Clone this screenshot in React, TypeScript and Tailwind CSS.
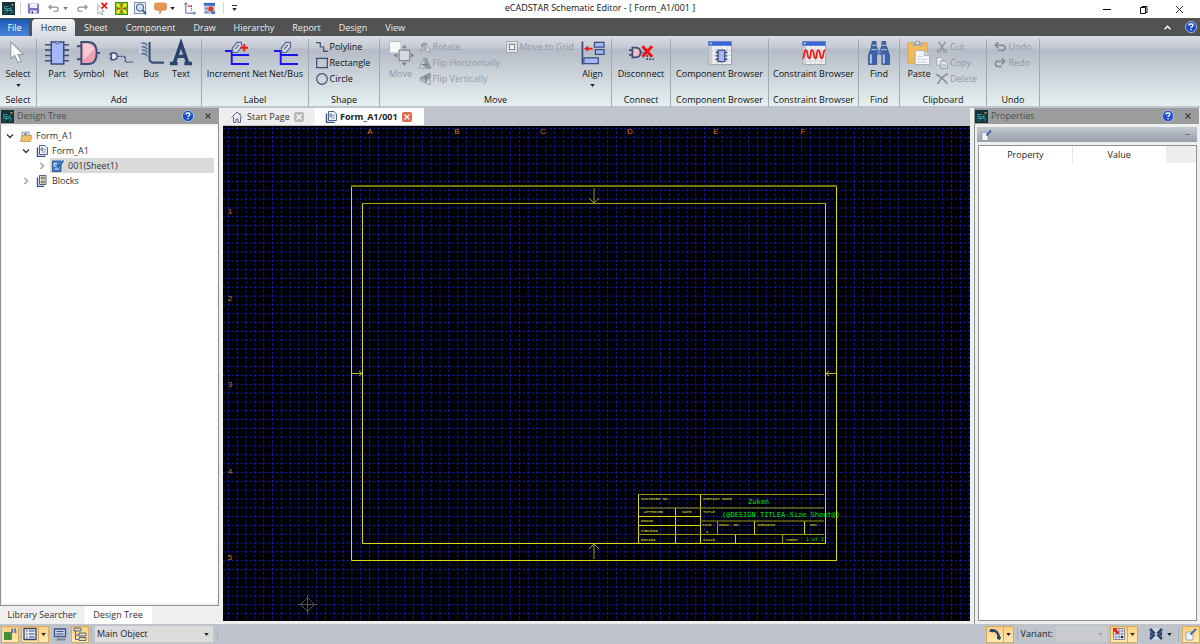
import type { ReactNode } from 'react';
import clsx from 'clsx';

/* ---------- small shared pieces ---------- */

function Caret({ className = 'text-[#222]' }: { className?: string }) {
  return (
    <svg viewBox="0 0 6 4" className={clsx('h-[3px] w-[5px] shrink-0', className)} aria-hidden>
      <path d="M0 0h6L3 4z" fill="currentColor" />
    </svg>
  );
}

function HelpIcon() {
  return (
    <svg viewBox="0 0 12 12" className="size-3" aria-hidden>
      <circle cx="6" cy="6" r="5.6" fill="#1f4fc4" stroke="#b9c6e6" strokeWidth=".8" />
      <path d="M2 4.500a4.500 4.500 0 0 1 8 0Q6 3 2 4.500z" fill="#6f97ea" />
      <path d="M4.200 4.600q0-1.700 1.800-1.700t1.800 1.500q0 .8-.9 1.300T6 7" fill="none" stroke="#fff" strokeWidth="1.300" />
      <rect x="5.400" y="8" width="1.300" height="1.300" fill="#fff" />
    </svg>
  );
}

function LogoIcon() {
  return (
    <svg viewBox="0 0 13 13" className="size-[13px] shrink-0" aria-hidden>
      <rect width="13" height="13" fill="#14323a" />
      <path d="M1.500 8.500h3v-2h-2V4.500h4M5.500 10V6.500h3v2h-3M9 4.500v4.500h2.500" fill="none" stroke="#36a0a3" strokeWidth=".9" />
      <path d="M1.500 11h4M8 11h3" stroke="#2b7f86" strokeWidth=".7" />
      <rect x="9.500" y="2" width="2" height="1.500" fill="#d99a3a" />
    </svg>
  );
}

function CloseIcon({ className }: { className?: string }) {
  return (
    <svg viewBox="0 0 8 8" className={clsx('size-2', className)} aria-hidden>
      <path d="M1.500 1.500l5 5M6.500 1.500l-5 5" stroke="currentColor" strokeWidth="1.100" />
    </svg>
  );
}

/* ---------- title bar ---------- */

function QuickButton({ label, children, wide }: { label: string; children: ReactNode; wide?: boolean }) {
  return (
    <button aria-label={label} className={clsx('flex h-4 items-center justify-center', wide ? 'w-5' : 'w-[19px]')}>
      <svg viewBox="0 0 14 14" className="size-[13px]" fill="none" aria-hidden>
        {children}
      </svg>
    </button>
  );
}

function TitleBar() {
  return (
    <header className="grid h-[18px] grid-cols-[1fr_auto_1fr] items-start bg-white">
      <div className="flex h-4 items-center">
        <div className="flex w-4 justify-center">
          <LogoIcon />
        </div>
        <div className="mr-0.5 ml-1 h-3 w-px bg-gray-300" />
        <QuickButton label="Save" wide>
          <path d="M1 1.500h11l1 1v10H1z" fill="#7a73b4" />
          <path d="M3 1.500h8v5H3z" fill="#f1f0f8" />
          <path d="M3.500 9h7v3.500h-7z" fill="#e2e0f0" />
          <path d="M5 10h1.500v2.500H5z" fill="#4b4490" />
        </QuickButton>
        <QuickButton label="Undo" wide>
          <path d="M4.500 3L2 5.500 4.500 8M2 5.500h7.500q2.500 0 2.500 2.200T9.500 10H7" stroke="#8a8a8a" strokeWidth="1.200" />
        </QuickButton>
        <Caret className="text-gray-500" />
        <div className="w-1" />
        <QuickButton label="Redo" wide>
          <path d="M9.500 3L12 5.500 9.500 8M12 5.500H4.500Q2 5.500 2 7.700T4.500 10H7" stroke="#8a8a8a" strokeWidth="1.200" />
        </QuickButton>
        <QuickButton label="Clear selection" wide>
          <path d="M2 3v10l2.500-2 1.500 3 1.500-.8L6 10h3z" fill="#fff" stroke="#8a93a5" strokeWidth=".8" />
          <path d="M6 1l6 6M12 1L6 7" stroke="#f01010" strokeWidth="1.900" />
        </QuickButton>
        <QuickButton label="Fit all">
          <path d="M0 0h14v14H0z" fill="#2e8b20" />
          <path d="M1 1h12v12H1z" fill="#7fc81c" />
          <path d="M2 2l3.500 3.500M12 2L8.500 5.500M2 12l3.500-3.500M12 12L8.500 8.500" stroke="#f4ee20" strokeWidth="2.500" />
          <path d="M7 2v10M2 7h10" stroke="#e0301c" strokeWidth="1.800" strokeDasharray="3.500 3" />
        </QuickButton>
        <QuickButton label="Zoom area">
          <path d="M.5.500h12v12H.5z" fill="#eef2f8" stroke="#6e7c96" />
          <circle cx="6.500" cy="6" r="3.800" fill="#cfe2f7" stroke="#52688f" strokeWidth="1.200" />
          <path d="M9.500 9l3.500 4" stroke="#3f5688" strokeWidth="2" />
        </QuickButton>
        <QuickButton label="Comment" wide>
          <path d="M2.500 1h9q2 0 2 2v4q0 2-2 2H8l-1.500 4L5.500 9h-3q-2 0-2-2V3q0-2 2-2z" fill="#e59650" stroke="#c98040" strokeWidth=".6" />
        </QuickButton>
        <Caret />
        <div className="w-1" />
        <QuickButton label="Origin" wide>
          <path d="M3 1v11h10" stroke="#3f5fb0" strokeWidth="1" />
          <path d="M1.500 3L3 .5 4.500 3M11 10.500l2.500 1.500-2.500 1.500" stroke="#3f5fb0" strokeWidth=".8" />
          <path d="M9 4v6" stroke="#555b86" strokeDasharray="1.500 1" />
          <path d="M5 4.500h3M9 3.500v2" stroke="#e02020" strokeWidth="1.300" />
        </QuickButton>
        <QuickButton label="Library" wide>
          <path d="M1 2h12v11H1z" fill="#c3cde6" />
          <path d="M1 1h12v3H1z" fill="#3a68c8" />
          <path d="M2 6h4v2H2zM2 10h4v2H2z" fill="#8492b8" />
          <circle cx="8.500" cy="7.500" r="2.800" fill="#e23b24" />
          <path d="M9 10h4v3H9z" fill="#3f78d8" />
        </QuickButton>
        <div className="mr-2 ml-1 h-3 w-px bg-gray-300" />
        <button aria-label="Customize toolbar" className="flex flex-col items-center gap-0.5 text-[#333]">
          <span className="h-px w-[5px] bg-[#333]" />
          <Caret />
        </button>
      </div>
      <h1 className="leading-[15px]">eCADSTAR Schematic Editor - [ Form_A1/001 ]</h1>
      <div className="flex justify-end pr-[3px]">
        <button aria-label="Minimize" className="flex h-[18px] w-9 items-center justify-center">
          <span className="h-px w-2 bg-black" />
        </button>
        <button aria-label="Restore" className="flex h-[18px] w-9 items-center justify-center">
          <svg viewBox="0 0 9 9" className="size-[9px]" fill="none" stroke="#111" aria-hidden>
            <path d="M1.500 2.500h5v6h-5zM3 2V1.500h5v6H7" />
          </svg>
        </button>
        <button aria-label="Close" className="flex h-[18px] w-9 items-center justify-center">
          <svg viewBox="0 0 9 9" className="size-[9px]" stroke="#222" strokeWidth=".9" aria-hidden>
            <path d="M1 1l7 7M8 1l-7 7" />
          </svg>
        </button>
      </div>
    </header>
  );
}

/* ---------- ribbon tabs ---------- */

const menus = ['Sheet', 'Component', 'Draw', 'Hierarchy', 'Report', 'Design', 'View'];

function MenuTabs() {
  return (
    <nav className="flex h-[18px] items-end bg-[#525252] text-[#ececec]">
      <button className="h-[17px] w-[29px] bg-linear-to-b from-[#1c57b0] to-[#4c86dc] text-white">File</button>
      <button className="ml-[3px] h-[17px] w-[43px] rounded-t-sm bg-linear-to-b from-[#f2f5f5] to-[#d9dde3] text-[#222]">
        Home
      </button>
      {menus.map((m) => (
        <button key={m} className="h-[17px] px-[9px]">
          {m}
        </button>
      ))}
      <div className="ml-auto flex h-[18px] items-center gap-3.5 pr-[3px]">
        <button aria-label="Collapse ribbon">
          <svg viewBox="0 0 7 5" className="h-[5px] w-[7px]" fill="none" stroke="#fff" strokeWidth="1.600" aria-hidden>
            <path d="M.5 4.300l3-3 3 3" />
          </svg>
        </button>
        <button aria-label="Help">
          <HelpIcon />
        </button>
      </div>
    </nav>
  );
}

/* ---------- ribbon icons ---------- */

const navy = '#3a4f78';

const icons: Record<string, ReactNode> = {
  select: (
    <path d="M5 1v17.500l4-3.500 3.500 7.500 3.500-1.500-3.500-7h5.500z" fill="#fff" stroke="#9097a5" strokeWidth="1.100" />
  ),
  part: (
    <>
      <path d="M0 4h25M0 9.500h25M0 15h25M0 20.500h25" stroke={navy} strokeWidth="1.600" />
      <path d="M6.500 1h13v23h-13z" fill="#a5b8fa" stroke={navy} strokeWidth="1.600" />
      <path d="M10 1.500q3 3 6 0" fill="#eef" stroke={navy} />
    </>
  ),
  symbol: (
    <>
      <path d="M0 5.500h5M0 19h5M20 12.500h4" stroke={navy} strokeWidth="2" />
      <path d="M4.500 1h7q9 0 9 11.500t-9 11.500h-7z" fill="#ee9fb0" stroke={navy} strokeWidth="2" />
      <path d="M6 2.500h5q6 1 7 6l-11 11z" fill="#fbdbe1" opacity=".7" />
    </>
  ),
  net: (
    <>
      <path d="M0 14h3M0 18h3" stroke={navy} strokeWidth="1.200" />
      <path d="M2.500 12.500H5q3.500 0 3.500 3.500T5 19.500H2.500z" fill="#e8ecf8" stroke={navy} strokeWidth="1.500" />
      <path d="M9 16h8v6h8" fill="none" stroke={navy} strokeWidth="1.500" strokeDasharray="2 .9" />
    </>
  ),
  bus: (
    <>
      <path d="M11 1v17q0 4.500 4 4.500h11" fill="none" stroke={navy} strokeWidth="2.200" />
      <path d="M0 2h4q4 0 4 3M1 6h3q4 0 4 3M1 9.500h3q4 0 4 3M2 13h2q4 0 4 3" fill="none" stroke="#56698f" strokeWidth="1.500" />
      <path d="M0 0h3v13H0z" fill="#c8d5f2" opacity=".8" />
    </>
  ),
  text: (
    <path
      d="M5.500 23L12.500 2.500 19.500 23M8 16h9M1 23.500h8M16 23.500h8"
      fill="none"
      stroke="#2c4370"
      strokeWidth="3.600"
    />
  ),
  incnet: (
    <>
      <path d="M0 10.500h7v13.500H25M7 14.500H25" fill="none" stroke="#1515ee" strokeWidth="2" />
      <path d="M7.500 7.500l5-6h4.500l.5 4.500-5 6h-4z" fill="#cfd6e4" stroke="#56678c" strokeWidth="1.200" />
      <path d="M10.500 8.500l4-4.500" stroke="#56678c" strokeWidth="1.200" />
      <path d="M16 7h8M20 3v8" stroke="#fa1414" strokeWidth="2" />
    </>
  ),
  netbus: (
    <>
      <path d="M0 10.500h7v13.500H25M7 14.500H25" fill="none" stroke="#1515ee" strokeWidth="2" />
      <path d="M7.500 7.500l5-6h4.500l.5 4.500-5 6h-4z" fill="#cfd6e4" stroke="#56678c" strokeWidth="1.200" />
      <path d="M10.500 8.500l4-4.500" stroke="#56678c" strokeWidth="1.200" />
    </>
  ),
  move: (
    <>
      <path d="M.5.500h12v12H.5z" fill="#f8f8f8" stroke="#b5b8bf" />
      <path d="M10.500 9.500h11v11h-11z" fill="#d8dadd" stroke="#85888f" strokeWidth="1.200" />
      <path d="M16 4l2.500 3.500h-5zM16 26l-2.500-3.500h5zM5 15l3.500-2.500v5zM26 15l-3-2.500v5z" fill="#7d8087" />
    </>
  ),
  align: (
    <>
      <path d="M1.500.500v24" stroke={navy} strokeWidth="1.800" />
      <path d="M14 1.500h10v5H14zM15 9h9v5h-9zM3 17.500h15v6H3z" fill="#a5b8fa" stroke={navy} strokeWidth="1.300" />
      <path d="M6 8h6" stroke="#f01818" strokeWidth="2" />
      <path d="M3 8l4.500-3v6z" fill="#f01818" />
    </>
  ),
  disconnect: (
    <>
      <path d="M0 9.500h4M0 14.500h4" stroke={navy} strokeWidth="1.800" />
      <path d="M3.500 7h3q5.500 0 5.500 5t-5.500 5h-3z" fill="#f5bcc6" stroke={navy} strokeWidth="1.800" />
      <path d="M12 12h7v7h7" fill="none" stroke={navy} strokeWidth="1.800" strokeDasharray="2 1.200" />
      <path d="M14 5.500l10 11M24 5.500l-10 11" stroke="#f31212" strokeWidth="3" />
    </>
  ),
  compbrowser: (
    <>
      <path d="M.5.500h24v24H.5z" fill="#eef0f0" stroke="#8c93a3" strokeWidth=".8" />
      <path d="M.5.500h24v4.500H.5z" fill="#3b66d6" />
      <path d="M.5 5h4v19.500h-4z" fill="#c9ccd0" />
      <path d="M2 2.500h2" stroke="#fff" />
      <path d="M9 6v18M14 6v18M20 6v18M5 10h19M5 15h19M5 20h19" stroke="#c6c9cf" strokeWidth=".8" />
      <path d="M8 12h12M8 15.500h12M8 19h12" stroke={navy} strokeWidth="1.400" />
      <path d="M10.500 9.500h7v12h-7z" fill="#a5b8fa" stroke={navy} strokeWidth="1.400" />
    </>
  ),
  conbrowser: (
    <>
      <path d="M.5.500h24v24H.5z" fill="#eef0f0" stroke="#8c93a3" strokeWidth=".8" />
      <path d="M.5.500h24v4.500H.5z" fill="#3b66d6" />
      <path d="M.5 5h4v19.500h-4z" fill="#c9ccd0" />
      <path d="M2 2.500h2" stroke="#fff" />
      <path d="M9 6v18M14 6v18M20 6v18M5 10h19M5 21h19" stroke="#c6c9cf" strokeWidth=".8" />
      <path
        d="M.5 18C3 18 1.500 9.500 4 9.500S5 18 7.500 18 8 9.500 10.500 9.500 11.500 18 14 18s.5-8.500 3-8.500S18 18 20.500 18s1-8.500 3.500-8.500"
        fill="none"
        stroke="#ee1c1c"
        strokeWidth="1.900"
      />
    </>
  ),
  find: (
    <>
      <path d="M5.500.500h4v4.500l2 5v4H10v10.500H1.500V15l3-9zM15.500.500h4V5l1 1 3 9v9.500H15.500V14H13.500v-4l2-5z" fill="#3c62a8" stroke="#2a4680" strokeWidth=".7" />
      <path d="M5.500 4.500h4M4.500 9h6M15.500 4.500h4M14.500 9h6" stroke="#9fb8e2" strokeWidth="1.300" />
      <path d="M4 14v9.500M17.500 14v9.500" stroke="#b4c8ea" strokeWidth="2" />
      <path d="M10.500 10h4v4h-4z" fill="#6484bf" />
    </>
  ),
  paste: (
    <>
      <path d="M1 2h20v21H1z" fill="#f1bc57" stroke="#d89f38" strokeWidth=".8" />
      <path d="M6 1.500h10v4H6z" fill="#aab1bd" />
      <path d="M9 .5h4v3H9z" fill="#e2e6ed" stroke="#7d8695" strokeWidth=".7" />
      <path d="M8.500 10h10l5 5v9.500h-15z" fill="#f7f8fb" stroke="#98a1b3" strokeWidth=".8" />
      <path d="M18 10v5h5" fill="#d4dae6" stroke="#98a1b3" strokeWidth=".8" />
      <path d="M11 16h6M11 19h10M11 22h10" stroke="#c4cbd9" />
    </>
  ),
  polyline: <path d="M0 2h5v5h4v5h5" fill="none" stroke={navy} strokeWidth="1.400" />,
  rectangle: <path d="M.7 1.500h12.600v11H.7z" fill="none" stroke={navy} strokeWidth="1.400" />,
  circle: <circle cx="7" cy="7" r="6.200" fill="none" stroke={navy} strokeWidth="1.400" />,
  rotate: (
    <>
      <path d="M8 3l6 9.500H8zM6 5v5L1 12z" fill="#d3d5d9" stroke="#94979e" />
      <path d="M3 7q0-5 6-4" fill="none" stroke="#8d9097" strokeWidth="1.800" />
    </>
  ),
  fliph: (
    <>
      <path d="M6 1v12H0z" fill="#d9dbde" stroke="#8d9097" />
      <path d="M8 1v12h6z" fill="#9a9da4" stroke="#85888f" />
      <path d="M3 9h7" stroke="#6f727a" strokeWidth="1.400" />
    </>
  ),
  flipv: (
    <>
      <path d="M13 6V0L1 6z" fill="#9a9da4" stroke="#85888f" />
      <path d="M13 8v6L1 8z" fill="#d9dbde" stroke="#8d9097" />
      <path d="M8 3v8" stroke="#6f727a" strokeWidth="1.500" />
    </>
  ),
  movegrid: (
    <>
      <path d="M.5.500h13v13H.5z" fill="#ecedef" stroke="#9b9ea5" />
      <path d="M4 0v14M7 0v14M10 0v14M0 4h14M0 7h14M0 10h14" stroke="#a5a8ae" strokeWidth=".9" strokeDasharray="1.500 .8" />
      <path d="M4 4h6v6H4z" fill="#f3f3f3" stroke="#77797f" />
    </>
  ),
  cut: (
    <>
      <path d="M3 1l6 9M11 1l-6 9" stroke="#8f9299" strokeWidth="1.700" />
      <circle cx="3.500" cy="11.500" r="1.800" fill="none" stroke="#8f9299" strokeWidth="1.300" />
      <circle cx="10.500" cy="11.500" r="1.800" fill="none" stroke="#8f9299" strokeWidth="1.300" />
    </>
  ),
  copy: (
    <>
      <path d="M1 .5h5l2 2v7H1z" fill="#eceded" stroke="#9b9ea5" />
      <path d="M5.500 4.500h5l3 3v6h-8z" fill="#e2e3e5" stroke="#8f9299" />
      <path d="M7 9h5M7 11h5" stroke="#9b9ea5" strokeWidth=".8" />
    </>
  ),
  delete: <path d="M0 1.500q7 3 13 11M14 1Q6 4 2 13" fill="none" stroke="#8f9299" strokeWidth="2" />,
  undo: <path d="M5 1.500L1.500 5 5 8.500M2 5h7q4 0 4 3t-4 3H5" fill="none" stroke="#85888f" strokeWidth="1.800" />,
  redo: <path d="M9 1.500L12.500 5 9 8.500M12 5H5Q1.500 5 1.500 8T5 11h4" fill="none" stroke="#85888f" strokeWidth="1.800" />,
};

/* ---------- ribbon ---------- */

interface BigButtonProps {
  icon: string;
  label: string;
  width: string;
  caret?: boolean;
  disabled?: boolean;
}

function BigButton({ icon, label, width, caret, disabled }: BigButtonProps) {
  return (
    <button
      disabled={disabled}
      className={clsx('flex shrink-0 flex-col items-center pt-0.5 whitespace-nowrap', width, disabled && 'text-[#9498a0]')}
    >
      <svg viewBox="0 0 25 25" className="size-6 overflow-visible" aria-hidden>
        {icons[icon]}
      </svg>
      <span className="mt-[3px] leading-3">{label}</span>
      {caret && (
        <span className="mt-1">
          <Caret />
        </span>
      )}
    </button>
  );
}

function SmallButton({ icon, label, disabled }: { icon: string; label: string; disabled?: boolean }) {
  return (
    <button
      disabled={disabled}
      className={clsx('flex h-4 items-center gap-0.5 whitespace-nowrap', disabled && 'text-[#9498a0]')}
    >
      <svg viewBox="0 0 14 14" className="size-3" aria-hidden>
        {icons[icon]}
      </svg>
      {label}
    </button>
  );
}

function Group({ label, width, children }: { label: string; width: string; children: ReactNode }) {
  return (
    <section className={clsx('flex shrink-0 flex-col border-r border-[#a3a9b2]', width)}>
      <div className="flex flex-1 justify-center">{children}</div>
      <h2 className="text-center leading-3 whitespace-nowrap">{label}</h2>
    </section>
  );
}

function Ribbon() {
  return (
    <div className="flex h-[70px] bg-[linear-gradient(#d9dde4,#c3c8d2_17%,#b5bbc7_19%,#e5f0f0)] pt-[3px]">
      <Group label="Select" width="w-[37px]">
        <BigButton icon="select" label="Select" width="w-9" caret />
      </Group>
      <Group label="Add" width="w-[165px]">
        <BigButton icon="part" label="Part" width="w-8" />
        <BigButton icon="symbol" label="Symbol" width="w-8" />
        <BigButton icon="net" label="Net" width="w-8" />
        <BigButton icon="bus" label="Bus" width="w-7" />
        <BigButton icon="text" label="Text" width="w-8" />
      </Group>
      <Group label="Label" width="w-[107px]">
        <BigButton icon="incnet" label="Increment Net" width="w-[62px]" />
        <BigButton icon="netbus" label="Net/Bus" width="w-9" />
      </Group>
      <Group label="Shape" width="w-[71px]">
        <div className="pr-0.5">
          <SmallButton icon="polyline" label="Polyline" />
          <SmallButton icon="rectangle" label="Rectangle" />
          <SmallButton icon="circle" label="Circle" />
        </div>
      </Group>
      <Group label="Move" width="w-[232px]">
        <BigButton icon="move" label="Move" width="w-9" disabled />
        <div className="w-[87px]">
          <SmallButton icon="rotate" label="Rotate" disabled />
          <SmallButton icon="fliph" label="Flip Horizontally" disabled />
          <SmallButton icon="flipv" label="Flip Vertically" disabled />
        </div>
        <div className="w-[71px]">
          <SmallButton icon="movegrid" label="Move to Grid" disabled />
        </div>
        <BigButton icon="align" label="Align" width="w-8" caret />
      </Group>
      <Group label="Connect" width="w-[59px]">
        <BigButton icon="disconnect" label="Disconnect" width="w-14" />
      </Group>
      <Group label="Component Browser" width="w-[98px]">
        <BigButton icon="compbrowser" label="Component Browser" width="w-24" />
      </Group>
      <Group label="Constraint Browser" width="w-[90px]">
        <BigButton icon="conbrowser" label="Constraint Browser" width="w-[88px]" />
      </Group>
      <Group label="Find" width="w-[41px]">
        <BigButton icon="find" label="Find" width="w-9" />
      </Group>
      <Group label="Clipboard" width="w-[87px]">
        <BigButton icon="paste" label="Paste" width="w-[34px]" />
        <div className="w-12">
          <SmallButton icon="cut" label="Cut" disabled />
          <SmallButton icon="copy" label="Copy" disabled />
          <SmallButton icon="delete" label="Delete" disabled />
        </div>
      </Group>
      <Group label="Undo" width="w-[53px]">
        <div>
          <SmallButton icon="undo" label="Undo" disabled />
          <SmallButton icon="redo" label="Redo" disabled />
        </div>
      </Group>
    </div>
  );
}

/* ---------- design tree ---------- */

function PanelHeader({ title }: { title: string }) {
  return (
    <div className="flex h-4 items-center gap-[3px] bg-[#9b9d9c] pl-px text-[#4c4e4d]">
      <LogoIcon />
      <h2 className="flex-1">{title}</h2>
      <button aria-label={`${title} help`}>
        <HelpIcon />
      </button>
      <button aria-label={`Close ${title}`} className="mx-[7px]">
        <CloseIcon className="text-[#3c3c3c]" />
      </button>
    </div>
  );
}

const sheetIcon = (
  <>
    <path d="M1.500 2.500v9h8" fill="none" stroke="#3c527e" strokeWidth="1.400" />
    <path d="M3.500.500h5.500L11.500 3v6.500h-8z" fill="#eef1f8" stroke="#4c6190" />
    <path d="M5 3h2v2.500H5zM6 7h4M8 4.500h2" fill="#a9b8dc" stroke="#6c80ac" strokeWidth=".8" />
  </>
);

const treeIcons = {
  project: (
    <>
      <path d="M2 2h7l1 8H2z" fill="#e3e7f1" stroke="#7b88a6" strokeWidth=".8" />
      <path d="M4 3h3v2H4z" fill="#7e93c6" />
      <path d="M.5 11.500l1.500-6h10l-1.500 6z" fill="#f0c070" stroke="#bf8a32" strokeWidth=".7" />
    </>
  ),
  sheets: sheetIcon,
  sheet: (
    <>
      <path d="M.5 1h8.500v10.500H.5z" fill="#4a80c4" stroke="#2c5a9a" />
      <path d="M2 3.500h2.500V6H2zM3 9h4M5.500 7.500h2" fill="none" stroke="#dbe8f8" />
      <path d="M4.500 4.500L6.500 7l5-6.500" fill="none" stroke="#2766b8" strokeWidth="1.800" />
    </>
  ),
  blocks: (
    <>
      <path d="M1.500 2.500v9h6.500" fill="none" stroke="#3c527e" strokeWidth="1.400" />
      <path d="M3.500.500h6.500v9h-6.500z" fill="#eef1f8" stroke="#4c6190" />
      <path d="M5 2h3.500v2H5zM5 6h3.500v2H5z" fill="#e3a94c" stroke="#6b6454" strokeWidth=".7" />
    </>
  ),
};

interface TreeRowProps {
  label: string;
  icon: keyof typeof treeIcons;
  indent: string;
  open?: boolean;
  selected?: boolean;
}

function TreeRow({ label, icon, indent, open, selected }: TreeRowProps) {
  return (
    <li className={clsx('flex h-[15px] items-center', indent)}>
      <button aria-label={open ? 'Collapse' : 'Expand'} className="flex w-3.5 justify-center">
        <svg
          viewBox="0 0 8 8"
          className={clsx('size-2', open ? 'text-[#333]' : 'text-[#999]')}
          fill="none"
          stroke="currentColor"
          strokeWidth="1.300"
          aria-hidden
        >
          {open ? <path d="M1 2.500l3 3 3-3" /> : <path d="M2.500 1l3 3-3 3" />}
        </svg>
      </button>
      <span className={clsx('ml-px flex h-full flex-1 items-center gap-1 pl-0.5', selected && 'bg-[#d9d9d9]')}>
        <svg viewBox="0 0 12 12" className="size-3" aria-hidden>
          {treeIcons[icon]}
        </svg>
        {label}
      </span>
    </li>
  );
}

function DesignTree() {
  return (
    <aside className="flex w-[219px] shrink-0 flex-col bg-[#efefef]">
      <PanelHeader title="Design Tree" />
      <div className="flex min-h-0 flex-1 flex-col border border-t-0 border-[#8e9096] bg-[#f3f3f3] px-px pt-0.5 pb-0.5">
        <ul className="flex-1 bg-white pt-0.5 pr-[3px] text-[#333]">
          <TreeRow label="Form_A1" icon="project" indent="pl-px" open />
          <TreeRow label="Form_A1" icon="sheets" indent="pl-[17px]" open />
          <TreeRow label="001(Sheet1)" icon="sheet" indent="pl-[33px]" selected />
          <TreeRow label="Blocks" icon="blocks" indent="pl-[17px]" />
        </ul>
      </div>
      <div className="flex h-[18px] pl-px text-[#333]">
        <button className="w-[83px] border-r border-gray-200">Library Searcher</button>
        <button className="w-[68px] bg-white">Design Tree</button>
      </div>
    </aside>
  );
}

/* ---------- document area ---------- */

function DocTabs() {
  return (
    <div className="flex h-[18px] bg-[#c0c4cd] pb-px">
      <div className="flex w-[92px] items-center gap-1 bg-[#eeeeee] pl-2 text-[#333]">
        <svg viewBox="0 0 12 12" className="size-3" fill="none" stroke="#5a6b8e" aria-hidden>
          <path d="M.5 6.500L6 1l5.500 5.500M2.500 6v5.500h2.500V8h2v3.500h2.500V6M9 2v2" />
        </svg>
        <button>Start Page</button>
        <button aria-label="Close Start Page" className="rounded-xs bg-[#b9b9b9] p-px text-white">
          <CloseIcon />
        </button>
      </div>
      <div className="flex w-[109px] items-center gap-[3px] bg-white pl-2.5 font-bold text-[#222]">
        <svg viewBox="0 0 12 12" className="size-3" aria-hidden>
          {sheetIcon}
        </svg>
        <button>Form_A1/001</button>
        <button aria-label="Close Form_A1/001" className="ml-px rounded-xs bg-[#dd6a50] p-px text-white">
          <CloseIcon />
        </button>
      </div>
    </div>
  );
}

const PITCH = 8.818;
const columns = ['A', 'B', 'C', 'D', 'E', 'F'];
const rows = ['1', '2', '3', '4', '5'];

// caption, x, baseline
const captions: [string, number, number][] = [
  ['CUSTOMER NO.', 418, 374],
  ['COMPANY NAME', 480, 374],
  ['APPROVED', 421, 387],
  ['DATE', 459, 387],
  ['TITLE', 480, 387],
  ['DRAWN', 418, 396],
  ['CHECKED', 418, 406],
  ['DESIGN', 418, 415],
  ['SIZE', 479, 400],
  ['A', 483, 407],
  ['DRAW. NO.', 496, 400],
  ['DRAWING', 535, 400],
  ['REV', 587, 400],
  ['SCALE', 480, 415],
  ['SHEET', 563, 415],
];

function SchematicCanvas() {
  return (
    <svg className="min-h-0 w-full flex-1 bg-black" role="img" aria-label="Schematic sheet">
      <g stroke="#1420b4" strokeWidth=".9" strokeDasharray="2.700 1.709">
        {Array.from({ length: 240 }, (_, i) => (
          <line key={`v${i}`} x1={5.4 + i * PITCH} x2={5.4 + i * PITCH} y1="1" y2="1600" />
        ))}
        {Array.from({ length: 180 }, (_, i) => (
          <line key={`h${i}`} x1="0" x2="2200" y1={2.6 + i * PITCH} y2={2.6 + i * PITCH} />
        ))}
      </g>

      <g fill="#d8741c" fontFamily="Liberation Sans, sans-serif" fontSize="8" textAnchor="middle">
        {columns.map((c, i) => (
          <text key={c} x={147 + Math.round(i * 86.6)} y="8">
            {c}
          </text>
        ))}
        {rows.map((r, i) => (
          <text key={r} x="7" y={88 + Math.round(i * 86.6)}>
            {r}
          </text>
        ))}
      </g>

      <g fill="none" stroke="#d8d80c">
        <path d="M128.500 59.500V434.500H613.500V59.500" />
        <path d="M128 60H614" stroke="#76760a" strokeWidth="2" />
        <path d="M139.500 77.500V417.500H602.500V77.500" />
        <path d="M139 77.500H603" stroke="#a6a60c" />
        <path d="M371 62V77M366 72l5 5 5-5M371 433V418M366 423l5-5 5 5" stroke="#9a9a14" />
        <path d="M129 247.500H139M136 245l3 2.500-3 2.500M613 247.500H603M606 245l-3 2.500 3 2.500" stroke="#b8b80e" />
        <path d="M415.500 417V368.500M477.500 368V417M415 390.500H477M415 399.500H477M452.500 382V417M531.500 395V408M581.500 395V408M512.500 408V417" />
        <path d="M415 368.500H601M415 382H601M477 395H601M415 408.500H601M494.500 395V408M559.500 408V417" stroke="#98980a" />
      </g>

      <g fill="#b4b40e" fontFamily="Liberation Mono, monospace" fontSize="4" fontWeight="bold">
        {captions.map(([t, x, y]) => (
          <text key={t} x={x} y={y}>
            {t}
          </text>
        ))}
      </g>
      <g fill="#00e800" fontFamily="DejaVu Sans Mono, monospace" fontSize="7">
        <text x="525" y="378">Zuken</text>
        <text x="499" y="391">(@DESIGN TITLEA-Size Sheet@)</text>
        <text x="583" y="415" fontSize="5">
          1 of 1
        </text>
      </g>

      <path d="M84.500 469V488M75 478.500H94M84.500 471.500l7 7-7 7-7-7z" fill="none" stroke="#55554c" />
    </svg>
  );
}

/* ---------- properties ---------- */

function Properties() {
  return (
    <aside className="flex w-[226px] shrink-0 flex-col bg-[#efefef] pr-px">
      <PanelHeader title="Properties" />
      <div className="flex min-h-0 flex-1 flex-col border-l border-[#8e9096] px-0.5 pt-[3px] pb-[3px]">
        <div className="flex h-[15px] items-center justify-between bg-linear-to-b from-[#c4c9d1] to-[#989fab] px-1">
          <svg viewBox="0 0 12 12" className="size-3" aria-hidden>
            <path d="M1 3.500h6v8H1z" fill="#f2f4f8" stroke="#8a93a5" strokeWidth=".7" />
            <path d="M5.500 6.500l4.500-5" stroke="#3c6ea8" strokeWidth="2.200" />
          </svg>
          <button aria-label="Collapse section" className="flex h-3 w-3 items-center justify-center">
            <span className="h-px w-[5px] bg-gray-500" />
          </button>
        </div>
        <div className="mt-[3px] ml-px flex-1 border border-[#8e9096] bg-white">
          <table className="w-full table-fixed text-[#222]">
            <thead>
              <tr className="h-[17px]">
                <th className="w-[43%] border-r border-gray-200 p-0 font-normal">Property</th>
                <th className="w-[43%] p-0 font-normal">Value</th>
                <th className="bg-[#eeeeee] p-0" aria-label="Actions" />
              </tr>
            </thead>
          </table>
        </div>
      </div>
    </aside>
  );
}

/* ---------- status bar ---------- */

function StatusButton({ label, on, caret, children }: { label: string; on?: boolean; caret?: boolean; children: ReactNode }) {
  return (
    <button
      aria-label={label}
      className={clsx(
        'flex h-[17px] items-center border',
        on ? 'border-[#d9ab58] bg-linear-to-b from-[#fbd083] to-[#ffeab0]' : 'border-transparent',
      )}
    >
      <svg viewBox="0 0 14 14" className="mx-px size-3.5" fill="none" aria-hidden>
        {children}
      </svg>
      {caret && (
        <span className={clsx('flex h-full w-2.5 items-center justify-center', on && 'border-l border-[#d9ab58]')}>
          <Caret />
        </span>
      )}
    </button>
  );
}

function Divider() {
  return <div className="h-3.5 w-px bg-[#aeb2bb]" />;
}

function StatusBar() {
  return (
    <footer className="flex h-5 items-center gap-0.5 bg-[#bfc3cc] pl-px text-[#222]">
      <StatusButton label="Library searcher" on>
        <path d="M1 5h8v8H1z" fill="#4d9b3f" />
        <path d="M3 5v8M6 5v8M1 8h8M1 11h8" stroke="#357a2c" strokeWidth=".7" />
        <path d="M8.500 6L9.500 1.500V6M13 6l-1-4.500V6" stroke="#5b77a6" strokeWidth="1.400" />
      </StatusButton>
      <StatusButton label="List" on caret>
        <path d="M1 1.500h12v11H1z" fill="#e9edf8" stroke="#30456f" strokeWidth="1.300" />
        <path d="M3 4h1.500M3 7h1.500M3 10h1.500M6 4h5.500M6 7h5.500M6 10h5.500" stroke="#30456f" strokeWidth="1.200" />
      </StatusButton>
      <StatusButton label="Console">
        <path d="M1.500 2h11v7.500h-11z" fill="#c8d2ea" stroke="#3f5688" strokeWidth="1.300" />
        <path d="M3.500 4.500h7M3.500 7h7" stroke="#3f5688" />
        <path d="M5 10.500v1.500h7v1H2.500" stroke="#7a8497" strokeWidth="1.200" />
      </StatusButton>
      <StatusButton label="Design tree" on>
        <path d="M2.500 4v8.500H6M2.500 8H6" stroke="#56678c" />
        <path d="M1 1h7v3H1zM6 6h7v3H6zM6 10.500h7v3H6z" fill="#e8d9a8" stroke="#56678c" />
      </StatusButton>
      <Divider />
      <div className="ml-px flex h-4 w-[118px] items-center bg-[#dcdcdc] pr-1">
        <select aria-label="Object filter" className="flex-1 appearance-none bg-transparent pl-0.5 leading-4 outline-none">
          <option>Main Object</option>
        </select>
        <Caret />
      </div>
      <div className="ml-0.5">
        <Divider />
      </div>

      <div className="ml-auto flex items-center gap-[3px]">
        <StatusButton label="Cross probe" on caret>
          <path d="M1 4.500L2.500 2l3 .5.5 2-1.500 1zM9 9.500l2-1.500 2 2.500-1 2.500-3-1z" fill="#2d4470" />
          <path d="M3 3.500q7-1 8 7.500" stroke="#2d4470" strokeWidth="2.600" />
        </StatusButton>
        <Divider />
        <label htmlFor="variant">Variant:</label>
        <div className="flex h-4 w-[51px] items-center bg-[#c9cbcf] pr-1">
          <select id="variant" disabled className="min-w-0 flex-1 appearance-none bg-transparent" />
          <Caret className="text-gray-400" />
        </div>
        <StatusButton label="Grid" on caret>
          <path d="M1.500 1.500h11v11h-11zM4 1v12M7 1v12M10 1v12M1 4h12M1 7h12M1 10h12" fill="#fff" stroke="#5d6a86" strokeWidth=".7" />
          <path d="M1 1h4.500L4.500 2.500l3 3-2 2-3-3L1 6z" fill="#f02020" />
          <path d="M9 9h2v2H9z" fill="#222" />
        </StatusButton>
        <div className="ml-1.5 flex items-center gap-[3px]">
          <StatusButton label="Snap" caret>
            <path d="M3 1.500h8L7 5.500zM3 12.500h8L7 8.500z" fill="#d5dbe8" />
            <path d="M1 2l4.500 4.500M13 2L8.500 6.500M1 12l4.500-4.500M13 12L8.500 7.500" stroke="#2f466e" strokeWidth="2.600" />
            <path d="M1 4.500v5L4.500 7zM13 4.500v5L9.500 7z" fill="#2f466e" />
          </StatusButton>
          <Divider />
        </div>
        <StatusButton label="Properties" on>
          <path d="M2 5h7v8H2z" fill="#f2f4f8" stroke="#8a93a5" strokeWidth=".8" />
          <path d="M6.500 7.500L12 2" stroke="#3c6ea8" strokeWidth="2" />
        </StatusButton>
      </div>
    </footer>
  );
}

export default function App() {
  return (
    <div className="flex h-screen flex-col overflow-hidden bg-[#efefef] font-['Open_Sans',sans-serif] text-[9px] leading-3 text-[#111]">
      <TitleBar />
      <MenuTabs />
      <Ribbon />
      <div className="flex min-h-0 flex-1 gap-1 border-t-2 border-[#c0c4cd]">
        <DesignTree />
        <main className="flex min-w-0 flex-1 flex-col pb-[3px]">
          <DocTabs />
          <SchematicCanvas />
        </main>
        <Properties />
      </div>
      <StatusBar />
    </div>
  );
}
